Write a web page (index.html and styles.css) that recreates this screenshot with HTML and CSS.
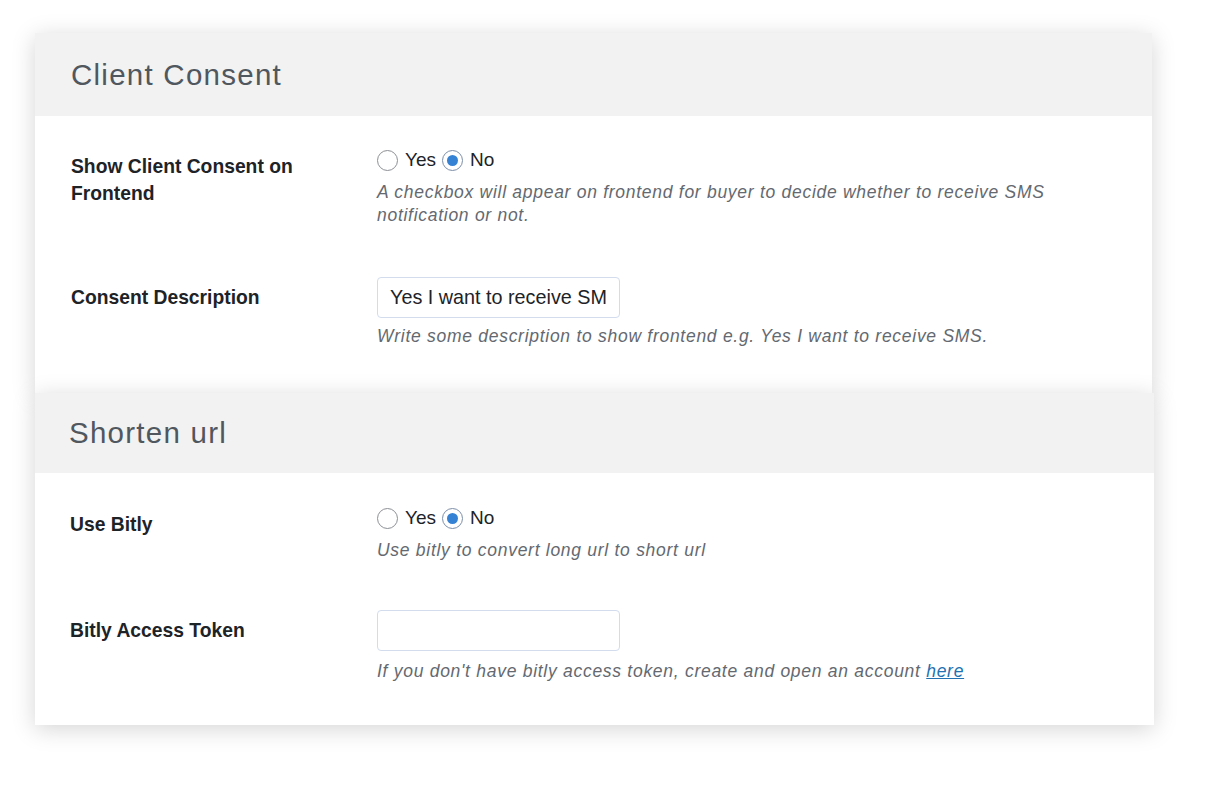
FILE: index.html
```html
<!DOCTYPE html>
<html>
<head>
<meta charset="utf-8">
<link rel="stylesheet" href="styles.css">
</head>
<body>
<div class="page">
  <section class="card card-first">
    <header class="card-head"><h2 class="card-title">Client Consent</h2></header>
    <div class="card-body">
      <div class="row">
        <div class="label">Show Client Consent on Frontend</div>
        <div class="field">
          <div class="radios">
            <span class="radio"></span><span class="radio-text">Yes</span>
            <span class="radio checked"></span><span class="radio-text">No</span>
          </div>
          <p class="help">A checkbox will appear on frontend for buyer to decide whether to receive SMS notification or not.</p>
        </div>
      </div>
      <div class="row">
        <div class="label label-input">Consent Description</div>
        <div class="field">
          <div class="input">Yes I want to receive SM</div>
          <p class="help help-input">Write some description to show frontend e.g. Yes I want to receive SMS.</p>
        </div>
      </div>
    </div>
  </section>
  <section class="card card-second">
    <header class="card-head"><h2 class="card-title">Shorten url</h2></header>
    <div class="card-body">
      <div class="row">
        <div class="label">Use Bitly</div>
        <div class="field">
          <div class="radios">
            <span class="radio"></span><span class="radio-text">Yes</span>
            <span class="radio checked"></span><span class="radio-text">No</span>
          </div>
          <p class="help">Use bitly to convert long url to short url</p>
        </div>
      </div>
      <div class="row">
        <div class="label label-input">Bitly Access Token</div>
        <div class="field">
          <div class="input"></div>
          <p class="help help-input">If you don't have bitly access token, create and open an account <a class="link" href="#">here</a></p>
        </div>
      </div>
    </div>
  </section>
</div>
</body>
</html>
```

FILE: styles.css
```css
html, body {
  margin: 0;
  padding: 0;
  background: #ffffff;
}
body {
  font-family: "Liberation Sans", Arial, sans-serif;
  color: #1d2327;
}
.page {
  padding: 33px 0 70px 35px;
}
.card {
  background: #ffffff;
  box-shadow: 0 4px 22px rgba(0, 0, 0, 0.17);
}
.card-first {
  width: 1117px;
}
.card-second {
  width: 1119px;
}
.card-head {
  background: #f2f2f2;
  display: flex;
  align-items: center;
  height: 83px;
  padding-left: 36px;
  box-sizing: border-box;
}
.card-second .card-head {
  height: 80px;
  padding-left: 34px;
}
.card-title {
  margin: 0;
  font-family: "Liberation Sans", Arial, sans-serif;
  font-weight: 400;
  font-size: 29.5px;
  letter-spacing: 1.25px;
  color: #50575e;
}
.card-body {
  padding: 32px 0 45px 36px;
  display: flex;
  flex-direction: column;
  gap: 50px;
}
.card-second .card-body {
  padding: 33px 0 42px 35px;
  gap: 48px;
}
.card-second .field {
  margin-left: 1px;
}
.card-second .help-input {
  margin-top: 9px;
}
.row {
  display: flex;
  align-items: flex-start;
}
.label {
  width: 240px;
  margin-right: 66px;
  font-weight: 700;
  font-size: 19.3px;
  line-height: 27px;
  padding-top: 5px;
  color: #1d2327;
}
.label-input {
  padding-top: 7px;
}
.field {
  flex: 1;
}
.radios {
  display: flex;
  align-items: center;
  height: 24px;
}
.radio {
  width: 21px;
  height: 21px;
  box-sizing: border-box;
  border: 1px solid #8c8f94;
  border-radius: 50%;
  background: #ffffff;
  display: flex;
  align-items: center;
  justify-content: center;
  margin-right: 7px;
}
.radio.checked {
  border-color: #7b8ea8;
}
.radio.checked::before {
  content: "";
  width: 11px;
  height: 11px;
  border-radius: 50%;
  background: #3582d4;
}
.radio-text {
  font-size: 19px;
  color: #1d2327;
  margin-right: 6px;
}
.help {
  margin: 9px 0 0 0;
  font-style: italic;
  font-size: 17.5px;
  letter-spacing: 0.72px;
  line-height: 23px;
  color: #646970;
  max-width: 700px;
}
.help-input {
  margin-top: 7px;
}
.input {
  width: 243px;
  height: 41px;
  box-sizing: border-box;
  border: 1px solid #d3dced;
  border-radius: 4px;
  padding: 0 12px;
  display: flex;
  align-items: center;
  font-size: 19.8px;
  color: #1d2327;
  white-space: nowrap;
  overflow: hidden;
}
.link {
  color: #2271b1;
  text-decoration: underline;
}
```
